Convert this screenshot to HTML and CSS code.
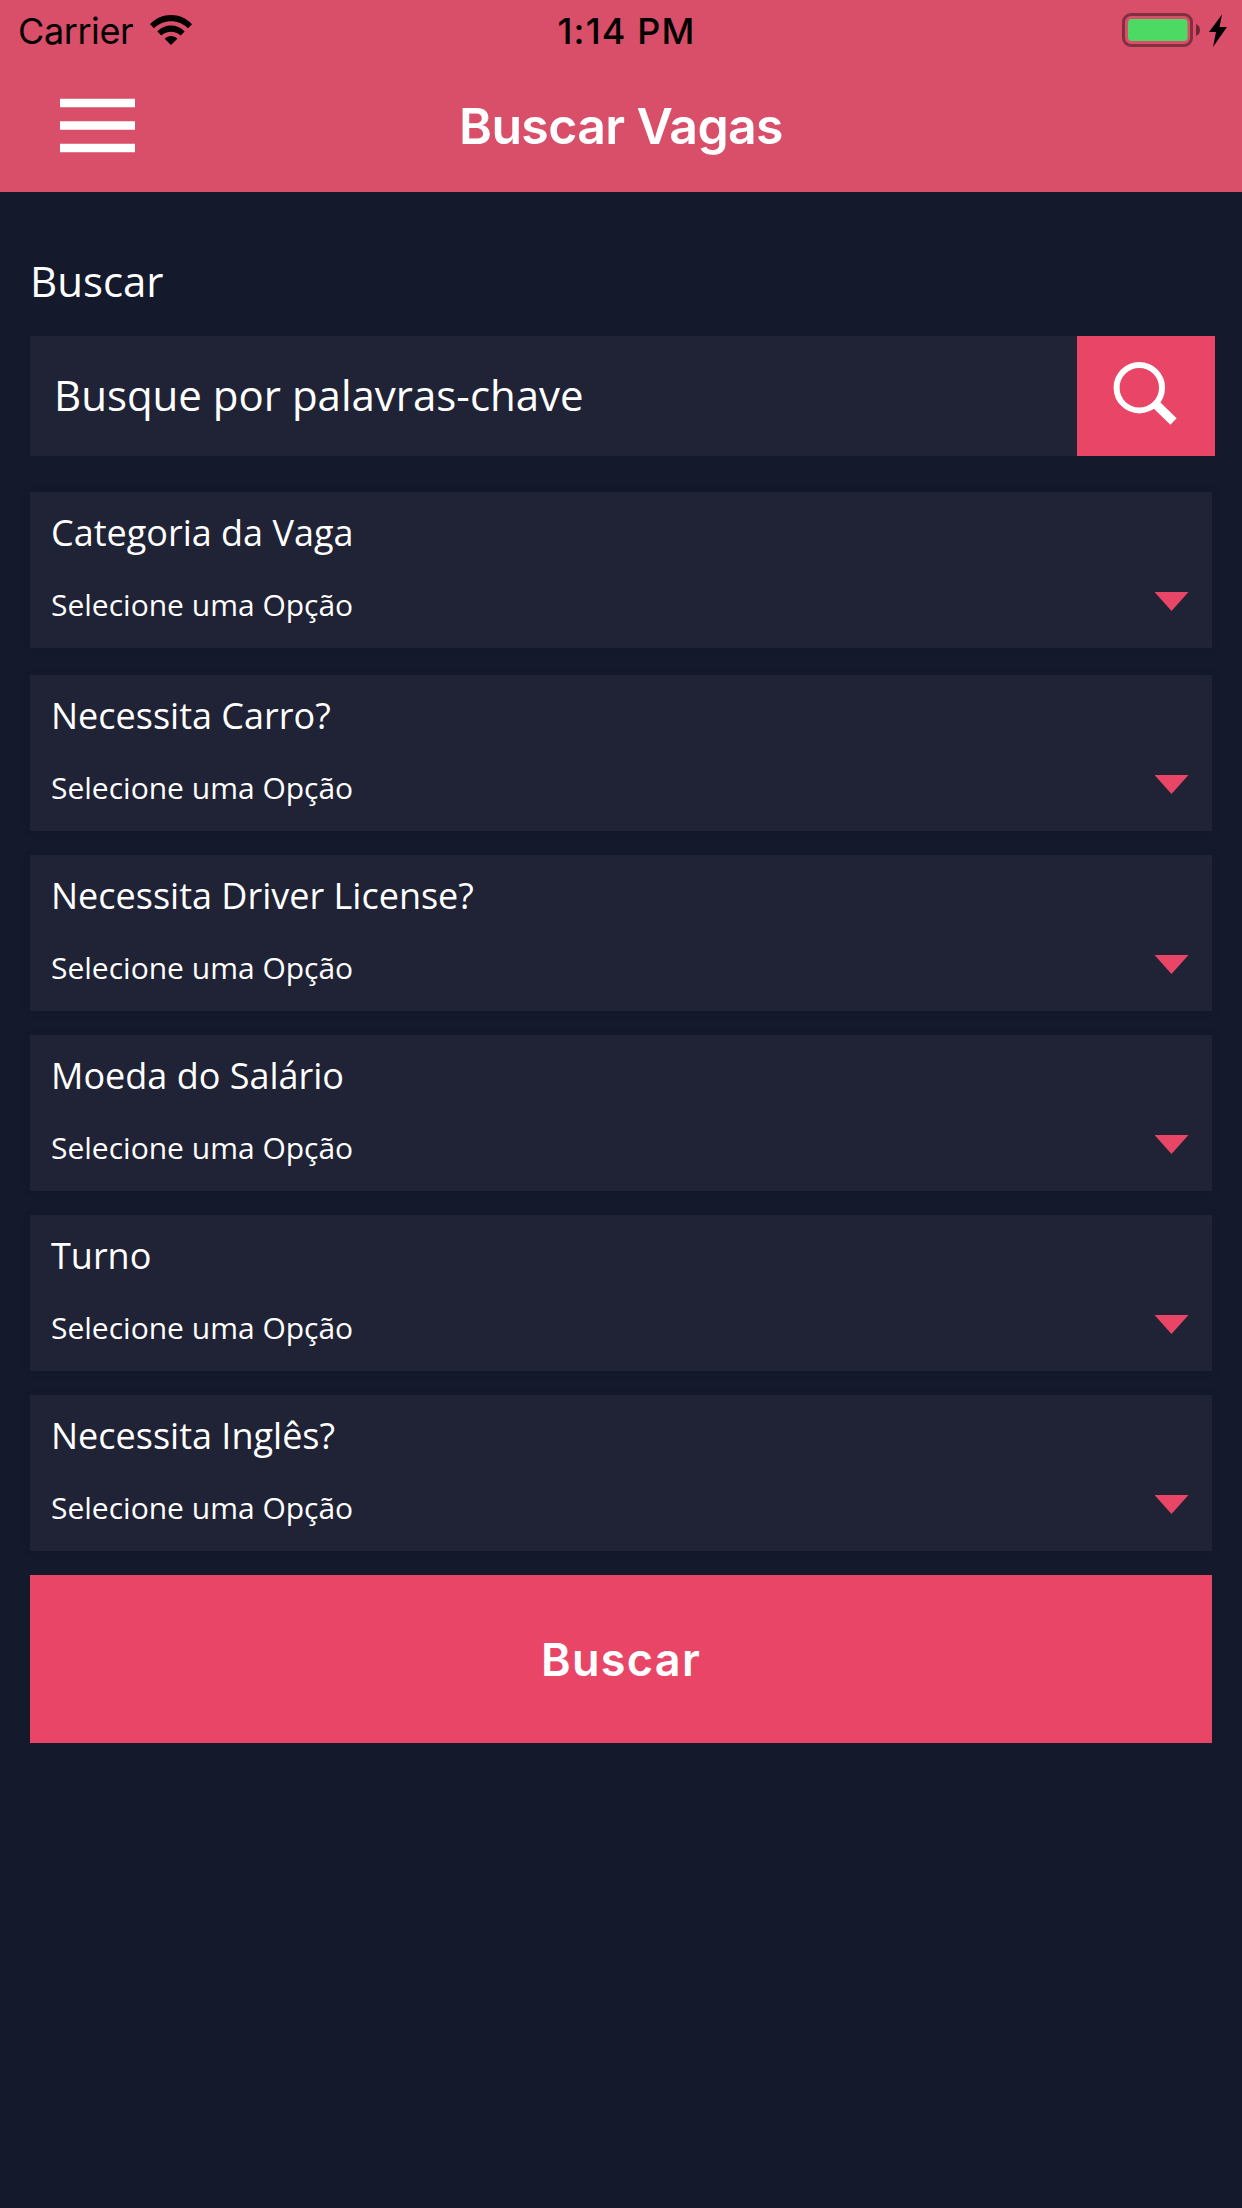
FILE: index.html
```
<!DOCTYPE html>
<html lang="pt-BR">
<head>
<meta charset="utf-8">
<title>Buscar Vagas</title>
<link rel="stylesheet" href="styles.css">
</head>
<body>
<header class="header">
  <div class="status">
    <div class="status-left">
      <span class="carrier">Carrier</span>
      <svg class="wifi" width="42" height="30" viewBox="0 0 42 30">
        <path d="M0 9.2C11.5-3 30.500-3 42 9.200L38 13.200C28.500 4 13.500 4 4 13.200Z"/>
        <path d="M7.300 16.500C15 8.600 27 8.600 34.700 16.500L30.600 20.600C25.300 15.600 16.700 15.600 11.400 20.600Z"/>
        <path d="M14.600 23.800C18.200 20.200 23.800 20.200 27.400 23.800L21 30Z"/>
      </svg>
    </div>
    <span class="time">1:14 PM</span>
    <div class="status-right">
      <svg width="105" height="34" viewBox="0 0 105 34">
        <rect x="1.500" y="1.500" width="68" height="31" rx="7.500" fill="none" stroke="#832f40" stroke-width="3"/>
        <rect x="6" y="6" width="59.500" height="22" rx="3.500" fill="#4cd964"/>
        <path d="M74 11C79.300 12.500 79.300 21.500 74 23Z" fill="#6d2735"/>
        <path d="M100 1.500L87 19H94L91 34L105 14H97.500Z"/>
      </svg>
    </div>
  </div>
  <nav class="navbar">
    <svg class="menu" width="75" height="55" viewBox="0 0 75 55">
      <path d="M0 5H75M0 27.500H75M0 50H75" stroke="#fff" stroke-width="8.500"/>
    </svg>
    <h1 class="title">Buscar Vagas</h1>
  </nav>
</header>
<main class="content">
  <h2 class="heading">Buscar</h2>
  <div class="search">
    <div class="search-field">Busque por palavras-chave</div>
    <div class="search-button">
      <svg width="68" height="70" viewBox="0 0 68 70" fill="none" stroke="#fff">
        <circle cx="28.300" cy="28.700" r="22.700" stroke-width="6"/>
        <path d="M43 43.500L62.500 62.500" stroke-width="9"/>
      </svg>
    </div>
  </div>
  <section class="card card-first">
    <div class="label">Categoria da Vaga</div>
    <div class="select"><span>Selecione uma Opção</span><i class="arrow"></i></div>
  </section>
  <section class="card">
    <div class="label">Necessita Carro?</div>
    <div class="select"><span>Selecione uma Opção</span><i class="arrow"></i></div>
  </section>
  <section class="card">
    <div class="label">Necessita Driver License?</div>
    <div class="select"><span>Selecione uma Opção</span><i class="arrow"></i></div>
  </section>
  <section class="card">
    <div class="label">Moeda do Salário</div>
    <div class="select"><span>Selecione uma Opção</span><i class="arrow"></i></div>
  </section>
  <section class="card">
    <div class="label">Turno</div>
    <div class="select"><span>Selecione uma Opção</span><i class="arrow"></i></div>
  </section>
  <section class="card">
    <div class="label">Necessita Inglês?</div>
    <div class="select"><span>Selecione uma Opção</span><i class="arrow"></i></div>
  </section>
  <div class="submit">Buscar</div>
</main>
</body>
</html>
```
FILE: styles.css
```
* { box-sizing: border-box; }
body {
  margin: 0;
  min-height: 2208px;
  background: #14192c;
  color: #fff;
  font-family: "Open Sans", "Noto Sans", sans-serif;
}
svg { display: block; }
.header {
  height: 192px;
  background: #d94e69;
  font-family: Inter, "Liberation Sans", sans-serif;
}
.status {
  display: grid;
  grid-template-columns: 1fr auto 1fr;
  height: 62px;
  padding: 0 15px 0 18px;
  line-height: 62px;
  font-size: 36px;
  color: #000;
}
.status-left { display: flex; }
.carrier { width: 132px; letter-spacing: -0.41px; }
.wifi { margin-top: 15px; }
.time { margin-left: 8px; font-weight: 500; letter-spacing: 1.150px; }
.status-right { display: flex; justify-content: flex-end; padding-top: 13px; }
.navbar {
  display: grid;
  grid-template-columns: 1fr auto 1fr;
  height: 128px;
  padding: 0 60px;
  align-items: center;
}
.menu { margin-top: -2px; }
.title {
  margin: 0;
  font-size: 50px;
  line-height: 60px;
  font-weight: 600;
  letter-spacing: -0.64px;
}
.content {
  display: flex;
  flex-direction: column;
  gap: 24px;
  padding: 59px 30px 0;
}
.heading { margin: 0; font-size: 42px; line-height: 60px; font-weight: 400; }
.search { display: flex; width: 1185px; height: 120px; margin-top: 1px; }
.search-field {
  flex: 1;
  padding-left: 24px;
  background: #1f2335;
  font-size: 42px;
  line-height: 118px;
}
.search-button { width: 138px; padding: 23px 0 0 34px; background: #e94567; }
.card {
  height: 156px;
  padding: 16px 23.500px 0 21px;
  background: #1f2335;
  box-shadow: 0 0 9px rgba(0, 0, 0, 0.1);
}
.card-first { margin: 12px 0 3px; }
.label { font-size: 36px; line-height: 50px; }
.select {
  display: flex;
  justify-content: space-between;
  margin-top: 26px;
  font-size: 30px;
  line-height: 42px;
}
.arrow {
  width: 34px;
  height: 19px;
  margin-top: 8px;
  background: #e94567;
  clip-path: polygon(0 0, 100% 0, 50% 100%);
}
.submit {
  height: 168px;
  padding-top: 1px;
  background: #e94567;
  font: 600 45px/168px Inter, "Liberation Sans", sans-serif;
  letter-spacing: 1.300px;
  text-align: center;
}
```
